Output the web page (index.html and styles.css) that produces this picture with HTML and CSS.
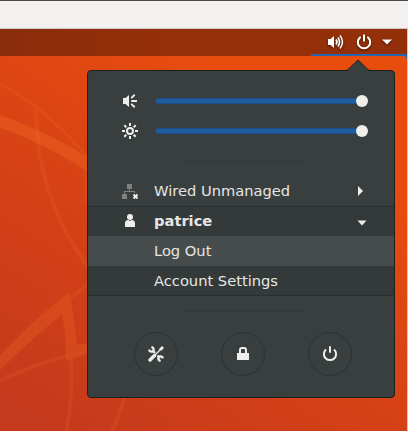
FILE: index.html
```html
<!DOCTYPE html>
<html lang="en">
<head>
<meta charset="utf-8">
<title>System menu</title>
<link rel="stylesheet" href="styles.css">
</head>
<body>
<div class="screen">
  <div class="window-strip"></div>
  <div class="desktop">
    <svg class="wallpaper" viewBox="0 56 407 375" width="407" height="375" fill="none" aria-hidden="true">
      <g stroke="#f56f28">
        <path d="M-4 120Q48 138 92 167" stroke-width="12" stroke-opacity=".32"/>
        <path d="M-2 83C30 98 65 130 88 158" stroke-width="3" stroke-opacity=".17"/>
        <path d="M36 109C36 170 56 225 90 269" stroke-width="4" stroke-opacity=".17"/>
        <path d="M86 168V205" stroke-width="3" stroke-opacity=".13"/>
        <path d="M70 298L90 283" stroke-width="4" stroke-opacity=".17"/>
        <path d="M-2 382Q34 364 67 356" stroke-width="4" stroke-opacity=".17"/>
        <path d="M71 359Q73 400 66 433" stroke-width="4" stroke-opacity=".17"/>
        <path d="M126 392Q120 414 111 433" stroke-width="4" stroke-opacity=".17"/>
      </g>
      <path d="M-2 357Q34 319 68 293L71 299Q75 323 77 345L90 342V353L66 361Q66 335 62 314Q32 339-2 372Z" fill="#f56f28" fill-opacity=".25"/>
    </svg>
    <header class="topbar">
      <div class="status">
        <svg width="16" height="16" viewBox="0 0 16 16" fill="none" stroke="#fff"><path d="M0 5h2.5L6 2v12l-3.5-3H0z" fill="#fff" stroke="none"/><path d="M8 5.5Q9.8 8 8 10.5M10 3.5Q13 8 10 12.5" stroke-width="1.8"/><path d="M12 1.5Q17 8 12 14.5" stroke-width="1.5"/></svg>
        <svg class="status-power" width="16" height="16" viewBox="0 0 16 16" fill="none" stroke="#fff" stroke-width="2" stroke-linecap="round"><path d="M4 3.4a6.2 6.2 0 1 0 8 0M8 1.2v5.6"/></svg>
        <svg width="10" height="6" viewBox="0 0 10 6"><path d="M0 .5h10L5 5.5z" fill="#fff"/></svg>
      </div>
    </header>
    <svg class="hot-corner" width="6" height="6" viewBox="0 0 6 6"><path d="M0 0h6v6Q6 0 0 0" fill="#2865ad"/></svg>
    <div class="menu">
      <svg class="arrow" width="26" height="13" viewBox="0 0 26 13"><path d="M0 13Q2 12 3 11L13 1 23 11Q24 12 26 13z" fill="#393f3f"/><path d="M0 11.5Q2 11.5 3 10.5L13 1 23 10.5Q24 11.5 26 11.5" fill="none" stroke="#1c2021"/></svg>
      <div class="row slider-row">
        <svg class="icon" width="16" height="16" viewBox="0 0 16 16" fill="none" stroke="#eeeeec" stroke-width="1.9"><path d="M1 5h2.5L7 2v12l-3.5-3H1z" fill="#eeeeec" stroke="none"/><path d="M9.3 8H15M9.2 5.1L12.7 1.7M9.2 10.9L12.7 14.3"/></svg>
        <div class="slider"><span class="knob"></span></div>
      </div>
      <div class="row slider-row">
        <svg class="icon" width="16" height="16" viewBox="0 0 16 16" fill="none" stroke="#eeeeec" stroke-width="2"><circle cx="8" cy="8" r="3"/><path d="M8 0v3M8 13v3M0 8h3M13 8h3M2.3 2.3l2 2M11.7 11.7l2 2M13.7 2.3l-2 2M4.3 11.7l-2 2"/></svg>
        <div class="slider"><span class="knob"></span></div>
      </div>
      <div class="separator"></div>
      <div class="row">
        <svg class="icon" width="16" height="16" viewBox="0 0 16 16"><path d="M5 1h5v5H5zM0 11h5v5H0zM7 6h1v2h5v2h-1V9H3v2H2V8h5z" fill="#858887" fill-opacity=".9"/><path d="M11.5 11.5l4 4M15.5 11.5l-4 4" stroke="#eeeeec" stroke-width="2"/></svg>
        <span class="label">Wired Unmanaged</span>
        <svg class="expand" width="10" height="10" viewBox="0 0 10 10"><path d="M2 0v10l5-5z" fill="#eeeeec"/></svg>
      </div>
      <div class="submenu">
        <div class="row user">
          <svg class="icon" width="16" height="16" viewBox="0 0 16 16" fill="#eeeeec"><circle cx="8" cy="4" r="3"/><path d="M3 14V10.5Q3 7 6 7Q8 8.5 10 7Q13 7 13 10.5V14Z"/></svg>
          <span class="label">patrice</span>
          <svg class="expand open" width="10" height="10" viewBox="0 0 10 10"><path d="M.5 2.5h9L5 7.5z" fill="#eeeeec"/></svg>
        </div>
        <div class="row item selected"><span class="label">Log Out</span></div>
        <div class="row item"><span class="label">Account Settings</span></div>
      </div>
      <div class="separator lower"></div>
      <div class="actions">
        <button class="action" aria-label="Settings"><svg width="16" height="16" viewBox="0 0 16 16" fill="none" stroke="#eeeeec"><path d="M2 14L6.5 9.5" stroke-width="3.4" stroke-linecap="round"/><path d="M7 9l6-6" stroke-width="1.2"/><path d="M11.5 2.5L14 0l2 2-2.5 2.5h-2z" fill="#eeeeec" stroke="none"/><path d="M4.5 4.5l2.5 2.5M9.5 9.5l2.5 2.5" stroke-width="2.4"/><path d="M3.4 1Q6.6 2 5.2 5.2Q2 6.6 1 3.6M12.6 15Q9.4 14 10.8 10.8Q14 9.4 15 12.4" stroke-width="2.3"/></svg></button>
        <button class="action" aria-label="Lock"><svg width="16" height="16" viewBox="0 0 16 16"><path d="M2 7h12v7H2z" fill="#eeeeec"/><path d="M5 7V4q0-2 2-2h2q2 0 2 2v3" fill="none" stroke="#eeeeec" stroke-width="2"/></svg></button>
        <button class="action" aria-label="Power off"><svg width="16" height="16" viewBox="0 0 16 16" fill="none" stroke="#eeeeec" stroke-width="2"><path d="M4 3.4a6.1 6.1 0 1 0 8 0M8 .3v6.5"/></svg></button>
      </div>
    </div>
  </div>
</div>
</body>
</html>
```
FILE: styles.css
```css
* { box-sizing: border-box; }
body {
  margin: 0;
  overflow: hidden;
  font-family: "DejaVu Sans", sans-serif;
  font-size: 14.667px;
  color: #e6e6e4;
}
svg { display: block; flex: none; }
.screen {
  width: 408px;
  height: 431px;
  display: flex;
  flex-direction: column;
  background: #d2c9c3;
}
.window-strip {
  height: 29px;
  flex: none;
  background: #f2f1f0;
  border-top: 1px solid #4c4744;
  border-bottom: 1px solid #d0cbc6;
}
.desktop {
  position: relative;
  width: 407px;
  height: 402px;
  background: linear-gradient(33deg, #c5391c 5%, #d64216 42%, #e94d0e 78%);
}
.wallpaper { position: absolute; left: 0; top: 27px; }
.topbar {
  position: relative;
  height: 27px;
  display: flex;
  justify-content: flex-end;
  background: linear-gradient(90deg, #8a2d0d, #942f09 40%, #943009);
}
.status {
  width: 96px;
  height: 27px;
  padding: 0 15px 0 17px;
  display: flex;
  align-items: center;
  justify-content: space-between;
  border-bottom: 2px solid #2865ad;
}
.status svg { filter: drop-shadow(0 1px 1px rgba(0, 0, 0, .6)); }
.status-power { margin-left: 2px; }
.hot-corner { position: absolute; right: 0; top: 26px; }
.menu {
  position: relative;
  width: 308px;
  height: 328px;
  margin: 14px 0 0 87px;
  padding-top: 15px;
  background: #393f3f;
  border: 1px solid #1c2021;
  border-radius: 4px;
}
.arrow { position: absolute; left: 257px; top: -12px; }
.row {
  height: 30px;
  display: flex;
  align-items: center;
  padding: 0 28px 0 34px;
}
.icon { margin-right: 16px; }
.label { line-height: 30px; white-space: nowrap; }
.expand { margin-left: auto; }
.slider {
  position: relative;
  width: 213px;
  height: 6px;
  margin-left: 1px;
  border: 1px solid #1b4f8b;
  border-radius: 3px;
  background: #215d9c;
}
.knob {
  position: absolute;
  right: -3px;
  top: -4px;
  width: 12px;
  height: 12px;
  border-radius: 50%;
  background: #eeeeec;
}
.separator {
  width: 122px;
  height: 1px;
  margin: 15px 0 14px 94px;
  background: #343a3a;
}
.submenu {
  height: 90px;
  background: #343a3a;
  box-shadow: inset 0 1px #282d2e, inset 0 -1px #282d2e;
}
.user { font-weight: bold; }
.open { position: relative; left: 1px; top: 2px; }
.item { padding-left: 66px; }
.selected { background: #464c4c; }
.lower { margin-bottom: 20px; }
.actions { display: flex; gap: 43px; margin-left: 46px; }
.action {
  width: 44px;
  height: 44px;
  padding: 0;
  display: flex;
  align-items: center;
  justify-content: center;
  border: 1px solid #2b3031;
  border-radius: 50%;
  background: transparent;
}
```
